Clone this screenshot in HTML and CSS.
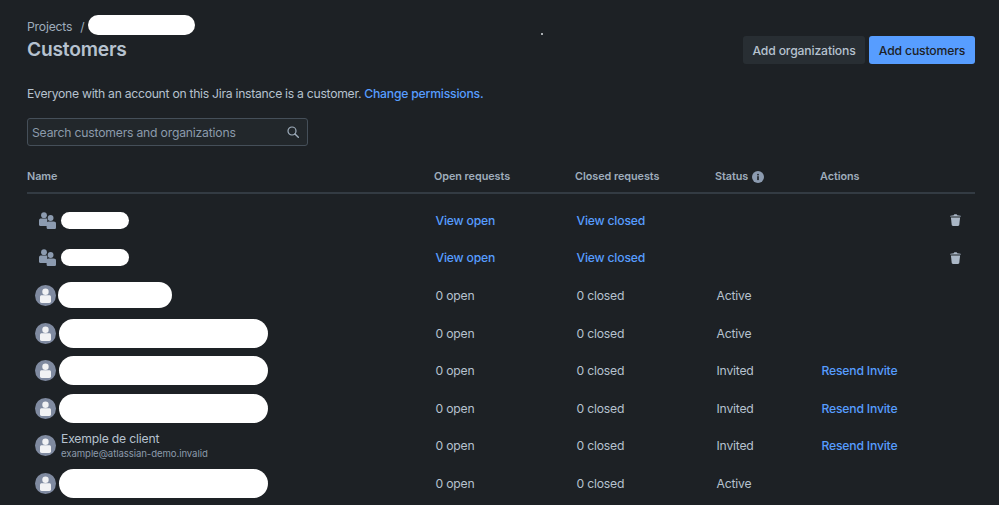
FILE: index.html
```html
<!DOCTYPE html>
<html lang="en">
<head>
<meta charset="utf-8">
<title>Customers</title>
<link rel="stylesheet" href="styles.css">
</head>
<body>
<svg class="defs" width="0" height="0" aria-hidden="true">
  <symbol id="group" viewBox="0 0 17 17">
    <circle cx="5" cy="3.2" r="2.9" fill="currentColor"/>
    <path d="M0 8.6C0 7.2 1 6.6 2.2 6.6H7.4C8 6.6 8.4 7 8.3 7.5L8 14H1.2C.5 14 0 13.5 0 12.8Z" fill="currentColor"/>
    <circle cx="11.6" cy="6" r="2.9" fill="currentColor"/>
    <path d="M7.6 11.4C7.6 10.2 8.5 9.5 9.6 9.5H14.8C16 9.5 17 10.2 17 11.4V15.4C17 16.3 16.3 17 15.4 17H9.2C8.3 17 7.6 16.3 7.6 15.4Z" fill="currentColor"/>
  </symbol>
  <symbol id="avatar" viewBox="0 0 21 21">
    <circle cx="10.5" cy="10.5" r="10.5" fill="#7f8aa0"/>
    <circle cx="10.5" cy="6.8" r="3.2" fill="#f1f2f4"/>
    <path d="M5 11.8C5 10.9 5.7 10.2 6.6 10.2H14.4C15.3 10.2 16 10.9 16 11.8V16.6C16 17.5 15.3 18 14.4 18H6.6C5.7 18 5 17.5 5 16.6Z" fill="#f1f2f4"/>
  </symbol>
  <symbol id="trash" viewBox="0 0 11 12">
    <path d="M3.8 1.3C3.9.5 4.3.2 5 .2H6C6.7.2 7.1.5 7.2 1.3L10.4 1.7C10.8 1.8 11 2 11 2.6H0C0 2 .2 1.8.6 1.7Z" fill="currentColor"/>
    <path d="M.9 3.6H10.1L9.3 10.8C9.2 11.5 8.8 12 8 12H3C2.2 12 1.8 11.5 1.7 10.8Z" fill="currentColor"/>
  </symbol>
</svg>
<main class="page">
  <span class="speck"></span>
  <header class="page-head">
    <div class="titles">
      <nav class="crumbs">
        <span>Projects</span>
        <span class="crumb-sep">/</span>
        <span class="pill pill-crumb"></span>
      </nav>
      <h1>Customers</h1>
    </div>
    <div class="actions">
      <button class="btn btn-default">Add organizations</button>
      <button class="btn btn-primary">Add customers</button>
    </div>
  </header>
  <p class="intro"><span>Everyone with an account on this Jira instance is a customer.</span><a href="#">Change permissions.</a></p>
  <div class="search">
    <span class="search-text">Search customers and organizations</span>
    <svg class="search-icon" viewBox="0 0 12 12" width="12" height="12" aria-hidden="true"><circle cx="5" cy="5" r="4" fill="none" stroke="currentColor" stroke-width="1.2"/><path d="M8 8L11.3 11.3" stroke="currentColor" stroke-width="1.4" stroke-linecap="round"/></svg>
  </div>
  <div class="table">
    <div class="row head">
      <div>Name</div>
      <div>Open requests</div>
      <div>Closed requests</div>
      <div class="status-head">Status <svg viewBox="0 0 12 12" width="12" height="12" aria-hidden="true"><circle cx="6" cy="6" r="6" fill="#8c9bb0"/><rect x="5.2" y="5.2" width="1.6" height="3.9" fill="#1d2125"/><rect x="5.2" y="2.9" width="1.6" height="1.5" fill="#1d2125"/></svg></div>
      <div>Actions</div>
    </div>

    <div class="row body">
      <div class="name"><svg class="ic-group"><use href="#group"/></svg><span class="pill pill-s"></span></div>
      <div><a href="#">View open</a></div>
      <div><a href="#">View closed</a></div>
      <div></div>
      <div class="act-end"><svg class="ic-trash"><use href="#trash"/></svg></div>
    </div>
    <div class="row body">
      <div class="name"><svg class="ic-group"><use href="#group"/></svg><span class="pill pill-s"></span></div>
      <div><a href="#">View open</a></div>
      <div><a href="#">View closed</a></div>
      <div></div>
      <div class="act-end"><svg class="ic-trash"><use href="#trash"/></svg></div>
    </div>
    <div class="row body">
      <div class="name"><svg class="ic-avatar"><use href="#avatar"/></svg><span class="pill pill-m"></span></div>
      <div>0 open</div>
      <div>0 closed</div>
      <div>Active</div>
      <div></div>
    </div>
    <div class="row body">
      <div class="name"><svg class="ic-avatar"><use href="#avatar"/></svg><span class="pill pill-l"></span></div>
      <div>0 open</div>
      <div>0 closed</div>
      <div>Active</div>
      <div></div>
    </div>
    <div class="row body">
      <div class="name"><svg class="ic-avatar"><use href="#avatar"/></svg><span class="pill pill-l"></span></div>
      <div>0 open</div>
      <div>0 closed</div>
      <div>Invited</div>
      <div><a href="#">Resend Invite</a></div>
    </div>
    <div class="row body">
      <div class="name"><svg class="ic-avatar"><use href="#avatar"/></svg><span class="pill pill-l"></span></div>
      <div>0 open</div>
      <div>0 closed</div>
      <div>Invited</div>
      <div><a href="#">Resend Invite</a></div>
    </div>
    <div class="row body">
      <div class="name"><svg class="ic-avatar"><use href="#avatar"/></svg>
        <div class="person"><span>Exemple de client</span><small>example@atlassian-demo.invalid</small></div>
      </div>
      <div>0 open</div>
      <div>0 closed</div>
      <div>Invited</div>
      <div><a href="#">Resend Invite</a></div>
    </div>
    <div class="row body">
      <div class="name"><svg class="ic-avatar"><use href="#avatar"/></svg><span class="pill pill-l"></span></div>
      <div>0 open</div>
      <div>0 closed</div>
      <div>Active</div>
      <div></div>
    </div>
  </div>
</main>
</body>
</html>
```
FILE: styles.css
```css
* { box-sizing: border-box; }
html, body { margin: 0; height: 100%; }
body {
  background: #1d2125;
  color: #b6c2cf;
  font-family: Inter, "Liberation Sans", sans-serif;
  font-size: 12.2px;
  letter-spacing: -0.2px;
  overflow: hidden;
}
a { color: #579dff; text-decoration: none; font-weight: 500; }
.defs { position: absolute; }
.page {
  position: relative;
  height: 505px;
  padding: 15px 24px 0 27px;
  overflow: hidden;
}
.speck {
  position: absolute;
  left: 541px;
  top: 33px;
  width: 2px;
  height: 2px;
  border-radius: 50%;
  background: #d8dce0;
}
.page-head { display: flex; justify-content: space-between; align-items: flex-start; height: 49px; }
.crumbs { display: flex; align-items: center; height: 22px; font-size: 12.2px; color: #9fadbc; }
.crumb-sep { margin-left: 8px; margin-right: 4px; }
h1 { margin: 0; font-size: 19.2px; line-height: 24px; font-weight: 600; letter-spacing: -0.2px; color: #b6c2cf; }
.actions { display: flex; gap: 4px; margin-top: 21px; }
.btn {
  height: 28px;
  border: 0;
  border-radius: 3px;
  padding: 1px 0 0;
  white-space: nowrap;
  letter-spacing: -0.15px;
  font: 500 12.2px/27px Inter, "Liberation Sans", sans-serif;
}
.btn-default { width: 122px; background: #282e33; color: #b6c2cf; }
.btn-primary { width: 106px; background: #579dff; color: #1d2125; }
.pill { display: block; flex: none; background: #fff; border-radius: 999px; }
.pill-crumb { width: 107px; height: 20px; margin-top: -2px; }
.pill-s { width: 68px; height: 17px; margin-left: 5px; }
.pill-m { width: 114px; height: 26px; margin-left: 2px; }
.pill-l { width: 209px; height: 29px; margin-left: 3px; }
.intro { display: flex; gap: 3px; margin: 22px 0 0; height: 16px; line-height: 16px; color: #b6c2cf; }
.intro span { letter-spacing: -0.28px; }
.search {
  display: flex;
  align-items: center;
  justify-content: space-between;
  width: 281px;
  height: 28px;
  margin-top: 16px;
  padding: 0 8px 0 4px;
  border: 1px solid #454f59;
  border-radius: 3px;
  background: #22272b;
  color: #8c9bab;
}
.search-icon { color: #9fadbc; }
.table { margin-top: 21px; }
.row {
  display: grid;
  grid-template-columns: 407px 141px 140px 105px 155px;
  align-items: center;
}
.head {
  height: 27px;
  margin-bottom: 7.5px;
  padding-bottom: 6px;
  border-bottom: 2px solid #333b43;
  font-size: 10.8px;
  font-weight: 600;
  letter-spacing: -0.03px;
  color: #9fadbc;
}
.status-head { display: flex; align-items: center; gap: 4px; }
.body { height: 37.6px; }
.body > div:not(.name) { padding-left: 1.5px; }
.name { display: flex; align-items: center; color: #b6c2cf; }
.ic-group { width: 17px; height: 17px; margin-left: 12px; color: #8c9bb0; }
.ic-avatar { width: 21px; height: 21px; margin-left: 8px; flex: none; }
.ic-trash { display: block; width: 11px; height: 12px; color: #aab7c6; }
.act-end { display: flex; justify-content: flex-end; padding-right: 14.5px; }
.person { display: flex; flex-direction: column; margin-left: 5px; }
.person span { line-height: 15px; }
.person small { margin-top: 2px; line-height: 12px; font-size: 9.6px; letter-spacing: -0.08px; color: #8c9bab; }
```
